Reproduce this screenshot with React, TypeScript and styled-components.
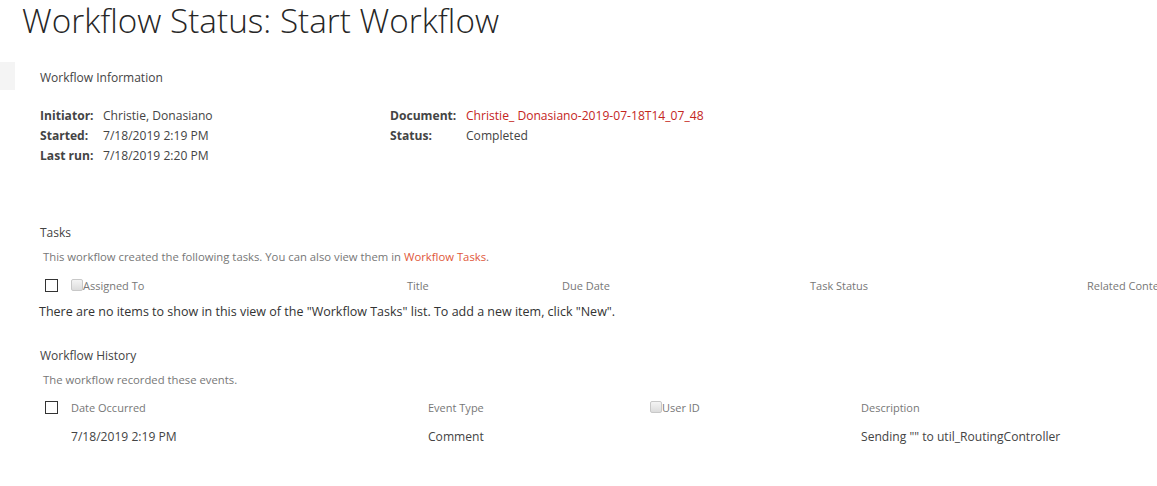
import React from 'react'
import styled, { createGlobalStyle } from 'styled-components'

const GlobalStyle = createGlobalStyle`
  html, body {
    margin: 0;
    padding: 0;
    background: #fff;
    overflow: hidden;
  }
  body {
    font-family: "Open Sans", "Noto Sans", "Liberation Sans", sans-serif;
    color: #444;
  }
`

const Page = styled.div`
  width: 1157px;
  height: 486px;
  overflow: hidden;
`

const PageTitle = styled.h1`
  margin: 0;
  padding-left: 22px;
  font-size: 33.3px;
  font-weight: 300;
  line-height: 40px;
  color: #262626;
  white-space: nowrap;
`

const InfoHeader = styled.div`
  display: flex;
  align-items: center;
  margin-top: 22px;
  height: 28px;
`

const SideTab = styled.div`
  width: 15px;
  height: 28px;
  background: #f4f4f4;
`

const SectionHeading = styled.div<{ top?: number; indent?: number; nudge?: number }>`
  margin-top: ${({ top }) => top ?? 0}px;
  padding-left: ${({ indent }) => indent ?? 40}px;
  padding-top: ${({ nudge }) => nudge ?? 0}px;
  font-size: 12px;
  line-height: 20px;
  color: #444;
`

const Fields = styled.div`
  display: grid;
  grid-template-columns: 350px auto;
  margin-top: 15px;
  padding-left: 40px;
`

const FieldCol = styled.div<{ label: number }>`
  display: grid;
  grid-template-columns: ${({ label }) => label}px auto;
  grid-auto-rows: 20px;
  align-items: center;
  font-size: 12.1px;
`

const Label = styled.span`
  font-weight: 700;
  color: #444;
`

const Value = styled.span<{ link?: boolean }>`
  color: ${({ link }) => (link ? '#c4261d' : '#444')};
  white-space: nowrap;
`

const Note = styled.div<{ top: number }>`
  margin-top: ${({ top }) => top}px;
  padding-left: 43px;
  font-size: 11.3px;
  line-height: 20px;
  color: #777;
`

const NoteLink = styled.span`
  color: #e0573a;
`

const Grid = styled.div<{ cols: string; top: number; small?: boolean }>`
  display: grid;
  grid-template-columns: ${({ cols }) => cols};
  align-items: center;
  margin-top: ${({ top }) => top}px;
  padding-left: 39px;
  height: 20px;
  font-size: ${({ small }) => (small ? 11 : 12.1)}px;
  color: ${({ small }) => (small ? '#777' : '#444')};
  white-space: nowrap;
`

const Cell = styled.div`
  display: flex;
  align-items: center;
  min-width: 0;
`

const SelectBox = styled.span`
  display: inline-block;
  width: 11px;
  height: 11px;
  margin-left: 6px;
  border: 1px solid #333;
  background: #fff;
`

const GhostBox = styled.span`
  display: inline-block;
  box-sizing: border-box;
  width: 12px;
  height: 12px;
  border: 1px solid #c8c8c8;
  border-radius: 2px;
  background: linear-gradient(#f4f4f4, #dcdcdc);
`

const EmptyMessage = styled.div`
  margin-top: 7px;
  padding-left: 39px;
  font-size: 12.5px;
  line-height: 20px;
  color: #333;
  white-space: nowrap;
`

const taskCols = '32px 336px 155px 248px 277px auto'
const historyCols = '32px 357px 222px 211px auto'

const App = () => {
  return (
    <Page>
      <GlobalStyle />
      <PageTitle>Workflow Status: Start Workflow</PageTitle>

      <InfoHeader>
        <SideTab />
        <SectionHeading indent={25} nudge={3}>Workflow Information</SectionHeading>
      </InfoHeader>

      <Fields>
        <FieldCol label={63}>
          <Label>Initiator:</Label>
          <Value>Christie, Donasiano</Value>
          <Label>Started:</Label>
          <Value>7/18/2019 2:19 PM</Value>
          <Label>Last run:</Label>
          <Value>7/18/2019 2:20 PM</Value>
        </FieldCol>
        <FieldCol label={76}>
          <Label>Document:</Label>
          <Value link>Christie_ Donasiano-2019-07-18T14_07_48</Value>
          <Label>Status:</Label>
          <Value>Completed</Value>
        </FieldCol>
      </Fields>

      <SectionHeading top={58}>Tasks</SectionHeading>
      <Note top={4}>
        This workflow created the following tasks. You can also view them in{' '}
        <NoteLink>Workflow Tasks</NoteLink>.
      </Note>
      <Grid cols={taskCols} top={8} small>
        <Cell><SelectBox /></Cell>
        <Cell><GhostBox />Assigned To</Cell>
        <Cell>Title</Cell>
        <Cell>Due Date</Cell>
        <Cell>Task Status</Cell>
        <Cell>Related Content</Cell>
      </Grid>
      <EmptyMessage>
        There are no items to show in this view of the "Workflow Tasks" list. To add a new item, click "New".
      </EmptyMessage>

      <SectionHeading top={24}>Workflow History</SectionHeading>
      <Note top={4}>The workflow recorded these events.</Note>
      <Grid cols={historyCols} top={7} small>
        <Cell><SelectBox /></Cell>
        <Cell>Date Occurred</Cell>
        <Cell>Event Type</Cell>
        <Cell><GhostBox />User ID</Cell>
        <Cell>Description</Cell>
      </Grid>
      <Grid cols={historyCols} top={9}>
        <Cell />
        <Cell>7/18/2019 2:19 PM</Cell>
        <Cell>Comment</Cell>
        <Cell />
        <Cell>Sending "" to util_RoutingController</Cell>
      </Grid>
    </Page>
  )
}

export default App
